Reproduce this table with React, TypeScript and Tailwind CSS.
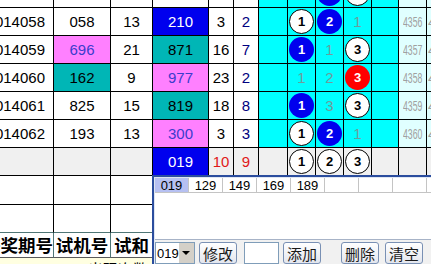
import React from 'react';

type Ball = { v: string; t: 'w' | 'b' | 'r' | 'p' };

interface Row {
  id: string;
  num: string;
  numBg?: string;
  sum: string;
  key: string;
  keyBg: string;
  a: string;
  b: string;
  balls: Ball[];
  idx: string;
}

const BLUE = 'bg-[#0000ee] text-white';
const TEAL = 'bg-[#00b6b6] text-black';
const PINK = 'bg-[#ff80ff] text-[#3c3ccc]';

const rows: Row[] = [
  { id: '2014057', num: '', sum: '', key: '', keyBg: 'bg-white', a: '', b: '', balls: [{ v: '1', t: 'p' }, { v: '2', t: 'b' }, { v: '3', t: 'w' }], idx: '' },
  { id: '2014058', num: '058', sum: '13', key: '210', keyBg: BLUE, a: '3', b: '2', balls: [{ v: '1', t: 'w' }, { v: '2', t: 'b' }, { v: '1', t: 'p' }], idx: '4356' },
  { id: '2014059', num: '696', numBg: PINK, sum: '21', key: '871', keyBg: TEAL, a: '16', b: '7', balls: [{ v: '1', t: 'b' }, { v: '1', t: 'p' }, { v: '3', t: 'w' }], idx: '4357' },
  { id: '2014060', num: '162', numBg: TEAL, sum: '9', key: '977', keyBg: PINK, a: '23', b: '2', balls: [{ v: '1', t: 'p' }, { v: '2', t: 'p' }, { v: '3', t: 'r' }], idx: '4358' },
  { id: '2014061', num: '825', sum: '15', key: '819', keyBg: TEAL, a: '18', b: '8', balls: [{ v: '1', t: 'b' }, { v: '3', t: 'p' }, { v: '3', t: 'w' }], idx: '4359' },
  { id: '2014062', num: '193', sum: '13', key: '300', keyBg: PINK, a: '3', b: '3', balls: [{ v: '1', t: 'w' }, { v: '2', t: 'b' }, { v: '1', t: 'p' }], idx: '4360' },
];

const GRID =
  'grid grid-cols-[54px_57px_42px_56px_25px_25px_29px_28px_28px_28px_27px_28px_1fr] h-[28px]';
const CELL = 'flex items-center justify-center border-r border-b border-black overflow-hidden';

function BallCell({ ball }: { ball: Ball }) {
  if (ball.t === 'p') {
    return <span className="text-[15px] text-[#6e9c9c]">{ball.v}</span>;
  }
  const tone =
    ball.t === 'b'
      ? 'bg-[#0000ee] text-white'
      : ball.t === 'r'
        ? 'bg-[#ff0000] text-white'
        : 'bg-white text-black border border-black';
  return (
    <span
      className={`flex h-[25px] w-[25px] shrink-0 items-center justify-center rounded-full text-[13px] font-bold ${tone}`}
    >
      {ball.v}
    </span>
  );
}

function Idx({ v }: { v: string }) {
  return (
    <span className="inline-block scale-x-[0.58] text-[15px] text-[#a0a0a0]">{v}</span>
  );
}

function TableRow({ r, first }: { r: Row; first?: boolean }) {
  return (
    <div className={`${GRID} ${first ? '-mt-[20px]' : ''}`}>
      <div className={`${CELL} justify-end bg-white pr-[8px]`}>{r.id}</div>
      <div className={`${CELL} ${r.numBg ?? 'bg-white'}`}>{r.num}</div>
      <div className={`${CELL} bg-white`}>{r.sum}</div>
      <div className={`${CELL} ${r.keyBg}`}>{r.key}</div>
      <div className={`${CELL} bg-white`}>{r.a}</div>
      <div className={`${CELL} bg-white text-[#000080]`}>{r.b}</div>
      <div className={`${CELL} bg-[#00ffff]`} />
      {r.balls.map((b, i) => (
        <div key={i} className={`${CELL} bg-[#00ffff]`}>
          <BallCell ball={b} />
        </div>
      ))}
      <div className={`${CELL} bg-[#00ffff]`} />
      <div className={`${CELL} bg-[#e0ffff]`}>
        <Idx v={r.idx} />
      </div>
      <div className="flex items-center overflow-hidden border-b border-black bg-[#e0ffff] pl-[1px]">
        <span className="text-[15px] text-[#a0a0a0]">4</span>
      </div>
    </div>
  );
}

function XpButton({ label }: { label: string }) {
  return (
    <div className="flex h-[22px] w-[38px] items-center justify-center rounded-[3px] border border-[#7990b4] bg-gradient-to-b from-white to-[#e3e6ee] text-[15px] text-[#1a1a1a]">
      {label}
    </div>
  );
}

export default function App() {
  return (
    <div className="flex h-[264px] w-[431px] flex-col overflow-hidden bg-white font-['Liberation_Sans','Noto_Sans_CJK_SC',sans-serif] text-[15px] leading-none text-black">
      <div className="flex flex-col">
        {rows.map((r, i) => (
          <TableRow key={r.id} r={r} first={i === 0} />
        ))}
        <div className={GRID}>
          <div className={`${CELL} bg-[#f0f0f0]`} />
          <div className={`${CELL} bg-[#f0f0f0]`} />
          <div className={`${CELL} bg-[#f0f0f0]`} />
          <div className={`${CELL} ${BLUE}`}>019</div>
          <div className={`${CELL} bg-[#f0f0f0] text-[#e01818]`}>10</div>
          <div className={`${CELL} bg-[#f0f0f0] text-[#e01818]`}>9</div>
          <div className={`${CELL} bg-[#f0f0f0]`} />
          {['1', '2', '3'].map((v) => (
            <div key={v} className={`${CELL} bg-[#f0f0f0]`}>
              <BallCell ball={{ v, t: 'w' }} />
            </div>
          ))}
          <div className={`${CELL} bg-[#f0f0f0]`} />
          <div className={`${CELL} bg-[#f0f0f0]`} />
          <div className="border-b border-black bg-[#f0f0f0]" />
        </div>
      </div>

      <div className="flex min-h-0 flex-1">
        <div className="flex w-[152px] shrink-0 flex-col">
          <div className="grid h-[29px] grid-cols-[54px_57px_41px]">
            <div className="border-r border-b border-black" />
            <div className="border-r border-b border-black" />
            <div className="border-b border-black" />
          </div>
          <div className="grid h-[28px] grid-cols-[54px_57px_41px]">
            <div className="border-r border-b border-r-black border-b-[#4f7676]" />
            <div className="border-r border-b border-r-black border-b-[#4f7676]" />
            <div className="border-b border-[#4f7676]" />
          </div>
          <div className="grid h-[25px] grid-cols-[54px_57px_41px] font-['Noto_Sans_CJK_SC',sans-serif] text-[17.5px] font-bold">
            <div className="flex items-center justify-end overflow-hidden whitespace-nowrap border-r border-b border-r-[#4f7676] border-b-[#5a5a5a]">
              开奖期号
            </div>
            <div className="flex items-center justify-center overflow-hidden whitespace-nowrap border-r border-b border-r-[#4f7676] border-b-[#5a5a5a]">
              试机号
            </div>
            <div className="flex items-center justify-center overflow-hidden whitespace-nowrap border-b border-[#5a5a5a]">
              试和
            </div>
          </div>
          <div className="flex-1 overflow-hidden bg-[#ffffe1] pl-[88px] pt-[3px] font-['Noto_Sans_CJK_SC',sans-serif] text-[15px]">
            出现次数
          </div>
        </div>

        <div className="-mt-px flex min-w-0 flex-1 flex-col border-l-2 border-t-2 border-[#2b4d9e] bg-[#dfe6f2] pl-px pt-px font-['Noto_Sans_CJK_SC',sans-serif]">
          <div className="flex h-[16px] bg-white font-['Liberation_Sans',sans-serif] text-[13px]">
            {['019', '129', '149', '169', '189', '', '', '', ''].map((v, i) => (
              <div
                key={i}
                className={`flex w-[34px] shrink-0 items-center justify-center border-r border-b border-[#c4c4c4] ${
                  i === 0 ? 'bg-[#b6c0f2]' : 'bg-white'
                }`}
              >
                {v}
              </div>
            ))}
          </div>
          <div className="h-[48px] bg-white" />
          <div className="flex flex-1 items-start border-t border-[#a7b3c7] bg-[#f1f1f1] pt-[2px]">
            <div className="flex h-[22px] w-[40px] border border-[#7f9db9] bg-white">
              <div className="flex flex-1 items-center pl-[1px] font-['Liberation_Sans',sans-serif] text-[13px]">
                019
              </div>
              <div className="flex w-[17px] items-center justify-center bg-[#d4d0c8]">
                <span className="h-0 w-0 border-x-[4px] border-t-[4px] border-x-transparent border-t-black" />
              </div>
            </div>
            <div className="ml-[4px]">
              <XpButton label="修改" />
            </div>
            <div className="ml-[7px] h-[22px] w-[35px] border border-[#7f9db9] bg-white" />
            <div className="ml-[4px]">
              <XpButton label="添加" />
            </div>
            <div className="ml-[20px]">
              <XpButton label="删除" />
            </div>
            <div className="ml-[6px]">
              <XpButton label="清空" />
            </div>
          </div>
        </div>
      </div>
    </div>
  );
}
